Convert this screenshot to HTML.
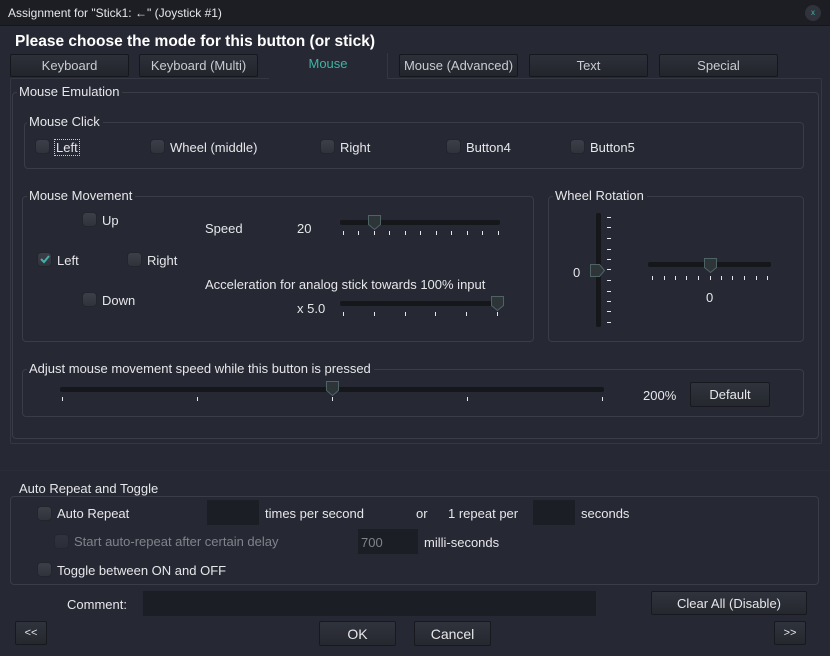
<!DOCTYPE html>
<html><head><meta charset="utf-8"><style>
*{box-sizing:border-box;margin:0;padding:0}
body{width:830px;height:656px;background:#262833;font-family:"Liberation Sans",sans-serif;font-size:13px;color:#e6e7ea;position:relative;overflow:hidden}
.a{position:absolute;white-space:nowrap}
.grp{position:absolute;border:1px solid #3a3d48;border-radius:4px}
.gt{position:absolute;background:#262833;padding:0 3px 0 2px;line-height:14px}
.cb{position:absolute;width:15px;height:15px;border-radius:4px;background:linear-gradient(#3c3f49,#30333c);border:1px solid #23252c;margin:-1px 0 0 -1px}
.tab{position:absolute;top:54px;height:23px;width:119px;border:1px solid #15171c;border-radius:2px;background:linear-gradient(#2d3039,#22252c);color:#c9cbd0;text-align:center;line-height:22px}
.btn{position:absolute;border:1px solid #17191e;border-radius:2px;background:linear-gradient(#30333c,#25282f);text-align:center;color:#e6e7ea}
.inp{position:absolute;background:#1c1e25;border:1px solid #1c1e25}
.gr{position:absolute;height:5px;background:#15171b;border-radius:2px}
</style></head><body>
<div class="a" style="left:0;top:0;width:830px;height:26px;background:#1c1e24;border-bottom:1px solid #15161a"></div>
<div class="a" style="left:8px;top:6px;font-size:12px">Assignment for "Stick1: ←" (Joystick #1)</div>
<div class="a" style="left:805px;top:5px;width:16px;height:16px;border-radius:8px;background:#30333b;color:#3fb3a5;font-size:8px;text-align:center;line-height:15px">x</div>
<div class="a" style="left:15px;top:33px;font-size:15.5px;font-weight:bold;color:#fff">Please choose the mode for this button (or stick)</div>
<div class="a" style="left:10px;top:78px;width:812px;height:366px;border:1px solid #353843;border-radius:2px"></div>
<div class="tab" style="left:10px">Keyboard</div>
<div class="tab" style="left:139px">Keyboard (Multi)</div>
<div class="a" style="left:269px;top:53px;width:119px;height:26px;background:#262833;border-right:1px solid #353843;text-align:center;line-height:22px;color:#3fb3a5">Mouse</div>
<div class="tab" style="left:399px">Mouse (Advanced)</div>
<div class="tab" style="left:529px">Text</div>
<div class="tab" style="left:659px">Special</div>

<div class="grp" style="left:12px;top:92px;width:807px;height:347px"></div>
<div class="gt" style="left:17px;top:85px">Mouse Emulation</div>

<div class="grp" style="left:24px;top:122px;width:780px;height:47px"></div>
<div class="gt" style="left:27px;top:115px">Mouse Click</div>
<div class="cb" style="left:36px;top:140px"></div><div class="a" style="left:54px;top:139px;border:1px dotted #ccc;padding:0 1px">Left</div>
<div class="cb" style="left:151px;top:140px"></div><div class="a" style="left:170px;top:140px">Wheel (middle)</div>
<div class="cb" style="left:321px;top:140px"></div><div class="a" style="left:340px;top:140px">Right</div>
<div class="cb" style="left:447px;top:140px"></div><div class="a" style="left:466px;top:140px">Button4</div>
<div class="cb" style="left:571px;top:140px"></div><div class="a" style="left:590px;top:140px">Button5</div>

<div class="grp" style="left:22px;top:196px;width:512px;height:146px"></div>
<div class="gt" style="left:27px;top:189px">Mouse Movement</div>
<div class="cb" style="left:83px;top:213px"></div><div class="a" style="left:102px;top:213px">Up</div>
<div class="cb" style="left:38px;top:253px"></div>
<svg class="a" style="left:38px;top:252px" width="14" height="14"><path d="M3 7l3 3l5-6" fill="none" stroke="#3fb3a5" stroke-width="2"/></svg>
<div class="a" style="left:57px;top:253px">Left</div>
<div class="cb" style="left:128px;top:253px"></div><div class="a" style="left:147px;top:253px">Right</div>
<div class="cb" style="left:83px;top:293px"></div><div class="a" style="left:102px;top:293px">Down</div>
<div class="a" style="left:205px;top:221px">Speed</div>
<div class="a" style="left:297px;top:221px">20</div>
<div class="a" style="left:205px;top:277px">Acceleration for analog stick towards 100% input</div>
<div class="a" style="left:297px;top:301px">x 5.0</div>
<div class="gr" style="left:340px;top:220px;width:160px"></div>
<div class="gr" style="left:340px;top:301px;width:160px"></div>
<div class="gr" style="left:60px;top:387px;width:544px"></div>
<div class="gr" style="left:648px;top:262px;width:123px"></div>
<div class="gr" style="left:596px;top:213px;width:5px;height:114px"></div>

<div class="grp" style="left:548px;top:196px;width:256px;height:146px"></div>
<div class="gt" style="left:553px;top:189px">Wheel Rotation</div>
<div class="a" style="left:573px;top:265px">0</div>
<div class="a" style="left:706px;top:290px">0</div>

<div class="grp" style="left:22px;top:369px;width:782px;height:48px"></div>
<div class="gt" style="left:27px;top:362px">Adjust mouse movement speed while this button is pressed</div>
<div class="a" style="left:643px;top:388px">200%</div>
<div class="btn" style="left:690px;top:382px;width:80px;height:25px;line-height:24px">Default</div>

<svg class="a" style="left:0;top:0" width="830" height="656">
<g fill="#e6e7ea">
<rect x="343" y="231" width="1" height="4"/><rect x="358" y="231" width="1" height="4"/><rect x="374" y="231" width="1" height="4"/><rect x="389" y="231" width="1" height="4"/><rect x="405" y="231" width="1" height="4"/><rect x="420" y="231" width="1" height="4"/><rect x="436" y="231" width="1" height="4"/><rect x="451" y="231" width="1" height="4"/><rect x="467" y="231" width="1" height="4"/><rect x="482" y="231" width="1" height="4"/><rect x="498" y="231" width="1" height="4"/>
<rect x="343" y="312" width="1" height="4"/><rect x="374" y="312" width="1" height="4"/><rect x="405" y="312" width="1" height="4"/><rect x="435" y="312" width="1" height="4"/><rect x="466" y="312" width="1" height="4"/><rect x="497" y="312" width="1" height="4"/>
<rect x="62" y="397" width="1" height="4"/><rect x="197" y="397" width="1" height="4"/><rect x="332" y="397" width="1" height="4"/><rect x="467" y="397" width="1" height="4"/><rect x="602" y="397" width="1" height="4"/>
<rect x="652" y="276" width="1" height="4"/><rect x="664" y="276" width="1" height="4"/><rect x="675" y="276" width="1" height="4"/><rect x="686" y="276" width="1" height="4"/><rect x="698" y="276" width="1" height="4"/><rect x="710" y="276" width="1" height="4"/><rect x="721" y="276" width="1" height="4"/><rect x="732" y="276" width="1" height="4"/><rect x="744" y="276" width="1" height="4"/><rect x="756" y="276" width="1" height="4"/><rect x="767" y="276" width="1" height="4"/>
<rect x="607" y="217" width="4" height="1"/><rect x="607" y="227" width="4" height="1"/><rect x="607" y="238" width="4" height="1"/><rect x="607" y="249" width="4" height="1"/><rect x="607" y="259" width="4" height="1"/><rect x="607" y="269" width="4" height="1"/><rect x="607" y="280" width="4" height="1"/><rect x="607" y="291" width="4" height="1"/><rect x="607" y="301" width="4" height="1"/><rect x="607" y="311" width="4" height="1"/><rect x="607" y="322" width="4" height="1"/>
</g>
<g fill="#2d3538" stroke="#4f6366" stroke-width="1">
<path d="M368.5 215.5h12v9l-6 5l-6-5z"/>
<path d="M491.5 296.5h12v9l-6 5l-6-5z"/>
<path d="M326.5 381.5h12v9l-6 5l-6-5z"/>
<path d="M704.5 258.5h12v9l-6 5l-6-5z"/>
<path d="M590.5 264.5v12h9l5-6l-5-6z"/>
</g>
</svg>

<div class="a" style="left:0;top:470px;width:830px;height:1px;background:#2b2d36"></div>
<div class="grp" style="left:10px;top:496px;width:809px;height:89px"></div>
<div class="gt" style="left:17px;top:482px">Auto Repeat and Toggle</div>
<div class="cb" style="left:38px;top:507px"></div><div class="a" style="left:57px;top:506px">Auto Repeat</div>
<div class="inp" style="left:207px;top:500px;width:52px;height:25px"></div>
<div class="a" style="left:265px;top:506px">times per second</div>
<div class="a" style="left:416px;top:506px">or</div>
<div class="a" style="left:448px;top:506px">1 repeat per</div>
<div class="inp" style="left:533px;top:500px;width:42px;height:25px"></div>
<div class="a" style="left:581px;top:506px">seconds</div>
<div class="cb" style="left:55px;top:535px;opacity:.5"></div><div class="a" style="left:74px;top:534px;color:#80838b">Start auto-repeat after certain delay</div>
<div class="inp" style="left:358px;top:529px;width:60px;height:25px"></div><div class="a" style="left:361px;top:535px;color:#80838b">700</div>
<div class="a" style="left:424px;top:535px">milli-seconds</div>
<div class="cb" style="left:38px;top:563px"></div><div class="a" style="left:57px;top:563px">Toggle between ON and OFF</div>

<div class="a" style="left:67px;top:597px">Comment:</div>
<div class="inp" style="left:143px;top:591px;width:453px;height:25px"></div>
<div class="btn" style="left:651px;top:591px;width:156px;height:24px;line-height:23px">Clear All (Disable)</div>
<div class="btn" style="left:15px;top:621px;width:32px;height:24px;line-height:23px;font-size:11px">&lt;&lt;</div>
<div class="btn" style="left:319px;top:621px;width:77px;height:25px;line-height:24px;font-size:14px">OK</div>
<div class="btn" style="left:414px;top:621px;width:77px;height:25px;line-height:24px;font-size:14px">Cancel</div>
<div class="btn" style="left:774px;top:621px;width:32px;height:24px;line-height:23px;font-size:11px">&gt;&gt;</div>
</body></html>
